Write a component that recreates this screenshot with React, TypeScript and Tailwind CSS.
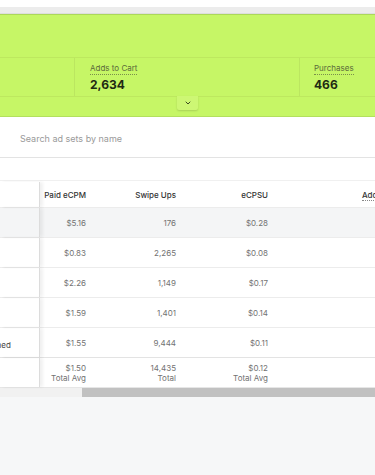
import { ChevronDown } from "lucide-react";

type Row = { ecpm: string; swipes: string; ecpsu: string; note?: string };

const rows: Row[] = [
  { ecpm: "$5.16", swipes: "176", ecpsu: "$0.28" },
  { ecpm: "$0.83", swipes: "2,265", ecpsu: "$0.08" },
  { ecpm: "$2.26", swipes: "1,149", ecpsu: "$0.17" },
  { ecpm: "$1.59", swipes: "1,401", ecpsu: "$0.14" },
  { ecpm: "$1.55", swipes: "9,444", ecpsu: "$0.11", note: "Finished" },
];

function Metric({ label, value, className }: { label: string; value: string; className: string }) {
  return (
    <div className={`flex flex-col justify-center ${className}`}>
      <span className="text-[8px] leading-[10px] text-[#5b6b3a] border-b border-dotted border-[#7a8f4a] self-start pb-px">
        {label}
      </span>
      <span className="text-[12px] leading-[15px] font-bold text-[#1f2a12] mt-[2px]">{value}</span>
    </div>
  );
}

export default function App() {
  return (
    <div className="w-[375px] h-[475px] overflow-hidden bg-[#f6f7f8] font-['Inter',sans-serif]">
      <div className="h-[7px] bg-white" />
      <div className="h-[7px] bg-[#ececec] border-b border-[#dedede]" />

      {/* summary banner */}
      <div className="relative h-[103px] bg-[#c6f666] border-t border-[#acd85a] border-b border-b-[#b3e05e]">
        <div className="absolute left-0 right-0 top-[42px] h-[40px] flex border-y border-[#bde85f]">
          <div className="w-[75px] border-r border-[#bbe660]" />
          <Metric label="Adds to Cart" value="2,634" className="w-[225px] pl-[15px] border-r border-[#bbe660]" />
          <Metric label="Purchases" value="466" className="flex-1 pl-[14px]" />
        </div>
        <div className="absolute left-[177px] top-[81px] w-[21px] h-[14px] bg-[#cdf774] rounded-b-[2px] shadow-[0_1px_2px_rgba(0,0,0,0.15)] flex items-center justify-center">
          <ChevronDown size={8} strokeWidth={3} className="text-[#3c4a22]" />
        </div>
      </div>

      {/* search */}
      <div className="h-[41px] bg-white border-b border-[#e3e3e3] flex items-center pl-[20px] pt-[3px]">
        <span className="text-[9px] text-[#9a9a9a]">Search ad sets by name</span>
      </div>
      <div className="h-[22px] bg-white" />

      {/* table */}
      <div className="bg-white text-[8px]">
        <div className="flex h-[27px] border-t border-[#f0f0f0] items-center pt-px">
          <div className="w-[40px] h-full border-r border-[#dcdcdc] shadow-[3px_0_3px_rgba(0,0,0,0.06)]" />
          <div className="w-[56px] pr-[10px] text-right font-medium text-[#333]">Paid eCPM</div>
          <div className="w-[90px] pr-[10px] text-right font-medium text-[#333]">Swipe Ups</div>
          <div className="w-[92px] pr-[10px] text-right font-medium text-[#333]">eCPSU</div>
          <div className="flex-1 pl-[84px] font-medium text-[#333] whitespace-nowrap overflow-hidden">
            <span className="border-b border-dotted border-[#888]">Adds to Cart</span>
          </div>
        </div>

        {rows.map((r, i) => (
          <div
            key={i}
            className={`flex h-[30px] items-center border-t border-[#ececec] text-[#727272] ${i === 0 ? "bg-[#f4f5f6]" : ""}`}
          >
            <div className="w-[40px] h-full border-r border-[#dcdcdc] shadow-[3px_0_3px_rgba(0,0,0,0.06)] flex items-center overflow-hidden pt-[4px]">
              {r.note && <span className="ml-[-21px] text-[#444] whitespace-nowrap">{r.note}</span>}
            </div>
            <div className="w-[56px] pr-[10px] text-right">{r.ecpm}</div>
            <div className="w-[90px] pr-[10px] text-right">{r.swipes}</div>
            <div className="w-[92px] pr-[10px] text-right">{r.ecpsu}</div>
            <div className="flex-1" />
          </div>
        ))}

        <div className="flex h-[30px] items-center border-t border-[#e3e3e3] text-[#727272] leading-[10px]">
          <div className="w-[40px] h-full border-r border-[#dcdcdc] shadow-[3px_0_3px_rgba(0,0,0,0.06)]" />
          <div className="w-[56px] pr-[10px] text-right">
            <div>$1.50</div>
            <div>Total Avg</div>
          </div>
          <div className="w-[90px] pr-[10px] text-right">
            <div>14,435</div>
            <div>Total</div>
          </div>
          <div className="w-[92px] pr-[10px] text-right">
            <div>$0.12</div>
            <div>Total Avg</div>
          </div>
          <div className="flex-1" />
        </div>
      </div>

      {/* horizontal scrollbar */}
      <div className="h-[10px] flex bg-[#f1f1f1] border-t border-[#e6e6e6]">
        <div className="w-[82px]" />
        <div className="flex-1 bg-[#c1c1c1]" />
      </div>
    </div>
  );
}
